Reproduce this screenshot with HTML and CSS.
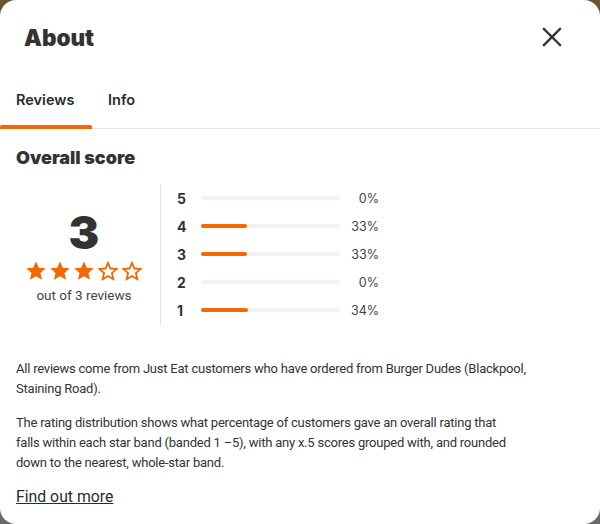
FILE: index.html
```html
<!DOCTYPE html>
<html lang="en">
<head>
<meta charset="utf-8">
<link rel="stylesheet" href="styles.css">
</head>
<body>
<div class="modal">
  <header class="modal-header">
    <h1 class="title">About</h1>
    <button class="close" aria-label="Close">
      <svg width="20" height="20" viewBox="0 0 20 20"><path d="M2 2 L18 18 M18 2 L2 18" stroke="#333" stroke-width="2.4" stroke-linecap="square"/></svg>
    </button>
  </header>
  <nav class="tabs">
    <span class="tab active">Reviews</span>
    <span class="tab">Info</span>
  </nav>
  <section class="content">
    <h2 class="subtitle">Overall score</h2>
    <div class="score">
      <div class="summary">
        <div class="big">3</div>
        <div class="stars">
          <svg viewBox="0 0 24 24"><path class="full" d="M12 1.5l3.1 7 7.5.6-5.7 5 1.7 7.4L12 17.6 5.4 21.5l1.7-7.4-5.7-5 7.5-.6z"/></svg>
          <svg viewBox="0 0 24 24"><path class="full" d="M12 1.5l3.1 7 7.5.6-5.7 5 1.7 7.4L12 17.6 5.4 21.5l1.7-7.4-5.7-5 7.5-.6z"/></svg>
          <svg viewBox="0 0 24 24"><path class="full" d="M12 1.5l3.1 7 7.5.6-5.7 5 1.7 7.4L12 17.6 5.4 21.5l1.7-7.4-5.7-5 7.5-.6z"/></svg>
          <svg viewBox="0 0 24 24"><path class="empty" d="M12 3.2l2.7 6.1 6.6.6-5 4.4 1.5 6.5L12 17.4l-5.8 3.4 1.5-6.5-5-4.4 6.6-.6z"/></svg>
          <svg viewBox="0 0 24 24"><path class="empty" d="M12 3.2l2.7 6.1 6.6.6-5 4.4 1.5 6.5L12 17.4l-5.8 3.4 1.5-6.5-5-4.4 6.6-.6z"/></svg>
        </div>
        <div class="count">out of 3 reviews</div>
      </div>
      <div class="bars">
        <div class="row"><span class="label">5</span><span class="track"><span class="fill" style="width:0%"></span></span><span class="pct">0%</span></div>
        <div class="row"><span class="label">4</span><span class="track"><span class="fill" style="width:33%"></span></span><span class="pct">33%</span></div>
        <div class="row"><span class="label">3</span><span class="track"><span class="fill" style="width:33%"></span></span><span class="pct">33%</span></div>
        <div class="row"><span class="label">2</span><span class="track"><span class="fill" style="width:0%"></span></span><span class="pct">0%</span></div>
        <div class="row"><span class="label">1</span><span class="track"><span class="fill" style="width:34%"></span></span><span class="pct">34%</span></div>
      </div>
    </div>
    <p class="text">All reviews come from Just Eat customers who have ordered from Burger Dudes (Blackpool, Staining Road).</p>
    <p class="text narrow">The rating distribution shows what percentage of customers gave an overall rating that falls within each star band (banded 1 –5), with any x.5 scores grouped with, and rounded down to the nearest, whole-star band.</p>
    <a class="more" href="#">Find out more</a>
  </section>
</div>
</body>
</html>
```
FILE: styles.css
```css
* { box-sizing: border-box; }
html, body { margin: 0; padding: 0; }
body {
  width: 600px;
  height: 524px;
  overflow: hidden;
  background: linear-gradient(#6d5334 0%, #6d5334 40%, #6a6a6a 60%, #6a6a6a 100%);
  font-family: "Roboto", "Noto Sans", sans-serif;
  color: #242e30;
}
.modal {
  width: 600px;
  height: 524px;
  background: #fff;
  border-radius: 16px;
  overflow: hidden;
}
.modal-header {
  display: flex;
  justify-content: space-between;
  align-items: center;
  height: 78px;
  padding: 0 38px 4px 24px;
}
.title {
  margin: 0;
  font-family: "Inter", sans-serif;
  font-weight: 900;
  font-size: 22.5px;
  color: #333;
}
.close {
  border: 0;
  background: none;
  padding: 0;
  display: flex;
}
.tabs {
  display: flex;
  height: 51px;
  border-bottom: 1px solid #e8e8e8;
  align-items: stretch;
}
.tab {
  font-family: "Inter", sans-serif;
  font-size: 14.5px;
  font-weight: 600;
  color: #242e30;
  padding: 13px 16px 0;
  position: relative;
}
.tab.active { width: 92px; }
.tab.active::after {
  content: "";
  position: absolute;
  left: 0;
  right: 0;
  bottom: -1px;
  height: 4px;
  background: #f36805;
  border-radius: 2px 2px 0 0;
}
.content { padding: 18px 16px 0; }
.subtitle {
  margin: 0;
  font-family: "Inter", sans-serif;
  font-weight: 900;
  font-size: 18px;
  color: #333;
}
.score {
  display: flex;
  margin-top: 16px;
}
.summary {
  width: 136px;
  margin-right: 8px;
  display: flex;
  flex-direction: column;
  align-items: center;
  justify-content: center;
  padding-top: 2px;
}
.big {
  font-family: "Inter", sans-serif;
  font-weight: 900;
  font-size: 46px;
  line-height: 46px;
  color: #333;
}
.stars {
  display: flex;
  gap: 2px;
  margin-top: 5px;
}
.stars svg { width: 22px; height: 22px; }
.full { fill: #f36805; }
.empty { fill: none; stroke: #f36805; stroke-width: 2; stroke-linejoin: miter; }
.count {
  margin-top: 5px;
  font-size: 13.5px;
  color: #444;
}
.bars {
  border-left: 1px solid #e5e5e5;
  padding-left: 16px;
  padding-bottom: 2px;
  display: flex;
  flex-direction: column;
}
.row {
  height: 28px;
  display: flex;
  align-items: center;
}
.label {
  width: 24px;
  font-family: "Inter", sans-serif;
  font-weight: 700;
  font-size: 14px;
  color: #333;
}
.track {
  width: 139px;
  height: 4px;
  background: #f5f2ee;
  border-radius: 2px;
  display: flex;
}
.fill {
  height: 4px;
  background: #f36805;
  border-radius: 2px;
}
.pct {
  width: 39px;
  text-align: right;
  font-family: "Inter", sans-serif;
  font-size: 12.5px;
  color: #444;
}
.text {
  margin: 33px 0 0;
  max-width: 524px;
  font-size: 13px;
  letter-spacing: -0.22px;
  line-height: 20px;
  color: #333;
}
.text.narrow { max-width: 502px; }
.text + .text { margin-top: 14px; }
.more {
  display: inline-block;
  margin-top: 14px;
  font-size: 15.8px;
  color: #242e30;
  text-decoration: underline;
}
```
